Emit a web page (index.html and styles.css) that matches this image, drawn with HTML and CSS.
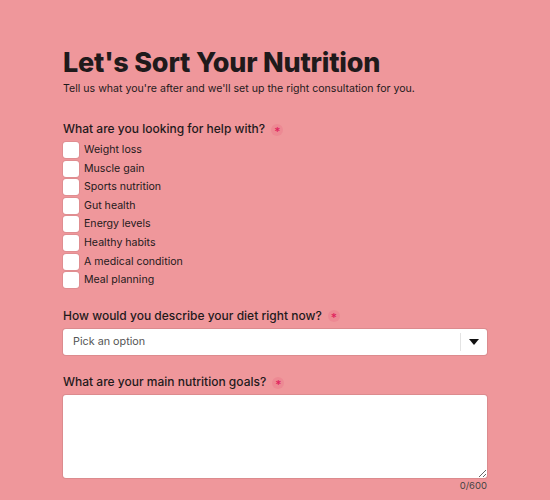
FILE: index.html
```html
<!DOCTYPE html>
<html lang="en">
  <head>
    <meta charset="UTF-8" />
    <meta name="viewport" content="width=device-width, initial-scale=1.0" />
    <title>Let's Sort Your Nutrition</title>
    <link rel="stylesheet" href="styles.css">
  </head>
  <body>
    <div class="container">
      <h1>Let's Sort Your Nutrition</h1>
      <p class="intro">Tell us what you're after and we'll set up the right consultation for you.</p>

      <form id="nutrition-form">
        <div class="form-group">
          <div class="question">What are you looking for help with? <span class="req">*</span></div>
          <div class="options">
            <label class="option"><input type="checkbox" /><span class="box"></span>Weight loss</label>
            <label class="option"><input type="checkbox" /><span class="box"></span>Muscle gain</label>
            <label class="option"><input type="checkbox" /><span class="box"></span>Sports nutrition</label>
            <label class="option"><input type="checkbox" /><span class="box"></span>Gut health</label>
            <label class="option"><input type="checkbox" /><span class="box"></span>Energy levels</label>
            <label class="option"><input type="checkbox" /><span class="box"></span>Healthy habits</label>
            <label class="option"><input type="checkbox" /><span class="box"></span>A medical condition</label>
            <label class="option"><input type="checkbox" /><span class="box"></span>Meal planning</label>
          </div>
        </div>

        <div class="form-group">
          <div class="question">How would you describe your diet right now? <span class="req">*</span></div>
          <div class="select">
            <span class="placeholder">Pick an option</span>
            <span class="select-arrow">
              <svg width="10" height="6" viewBox="0 0 10 6"><path d="M0 0h10L5 6z" fill="#111"/></svg>
            </span>
          </div>
        </div>

        <div class="form-group">
          <div class="question">What are your main nutrition goals? <span class="req">*</span></div>
          <textarea id="goals" maxlength="600"></textarea>
          <div class="counter">0/600</div>
        </div>
      </form>
    </div>
  </body>
</html>
```

FILE: styles.css
```css
body {
  font-family: "Inter", "Noto Sans", sans-serif;
  background-color: #ef979b;
  color: #1f1a1b;
  margin: 0;
}

.container {
  width: 424px;
  margin: 0 auto;
  padding-top: 45px;
}

h1 {
  font-size: 27px;
  font-weight: 800;
  letter-spacing: -0.2px;
  margin: 0;
  line-height: 36px;
}

.intro {
  font-size: 10.6px;
  margin: 1px 0 24px;
  line-height: 14px;
}

.form-group {
  margin-bottom: 18.5px;
}

.question {
  font-size: 12px;
  font-weight: 500;
  line-height: 18px;
  margin-bottom: 4px;
}

.req {
  display: inline-block;
  width: 12px;
  height: 12px;
  margin-left: 3px;
  border-radius: 50%;
  background: rgba(226, 60, 110, 0.15);
  color: #e0245e;
  font-size: 12px;
  line-height: 15px;
  text-align: center;
  vertical-align: middle;
}

.options {
  display: flex;
  flex-direction: column;
  gap: 2.6px;
}

.option {
  display: flex;
  align-items: center;
  font-size: 10.6px;
  line-height: 16px;
}

.option input {
  display: none;
}

.box {
  width: 16px;
  height: 16px;
  background: #fff;
  border-radius: 3px;
  box-shadow: 0 0 0 1px rgba(0, 0, 0, 0.06);
  margin-right: 5px;
}

.select {
  display: flex;
  align-items: center;
  height: 26px;
  background: #fff;
  border-radius: 3px;
  box-shadow: 0 0 0 1px rgba(0, 0, 0, 0.08);
}

.placeholder {
  flex: 1;
  padding-left: 10px;
  font-size: 10.8px;
  color: #555;
}

.select-arrow {
  display: flex;
  align-items: center;
  justify-content: center;
  width: 26px;
  height: 18px;
  border-left: 1px solid #e3e3e3;
}

textarea {
  display: block;
  box-sizing: border-box;
  width: 100%;
  height: 83px;
  border: none;
  border-radius: 3px;
  box-shadow: 0 0 0 1px rgba(0, 0, 0, 0.08);
  font-family: inherit;
  margin: 0;
}

.counter {
  text-align: right;
  font-size: 9.5px;
  color: #444;
  margin-top: 2px;
}
```
